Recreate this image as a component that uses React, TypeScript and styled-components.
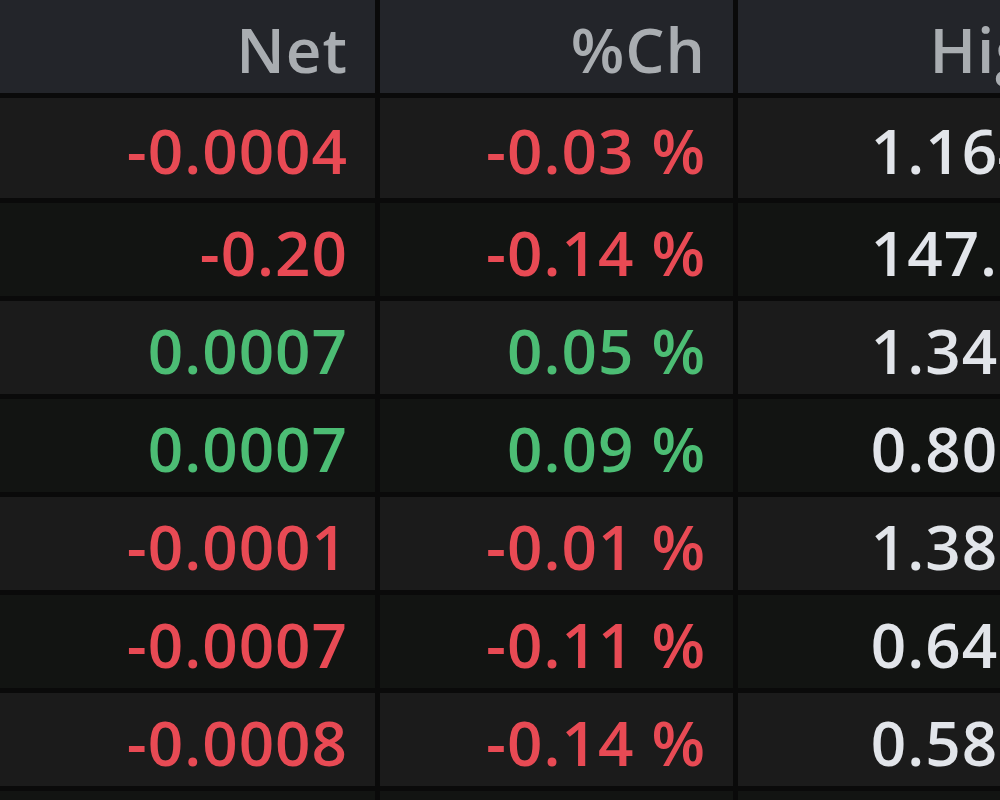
import { createGlobalStyle, styled } from "styled-components";

const GlobalStyle = createGlobalStyle`
    html, body {
        margin: 0;
        padding: 0;
        background: #0a0a0a;
        overflow: hidden;
    }
    * {
        box-sizing: border-box;
    }
`;

type Tone = "up" | "down" | "flat";

interface QuoteRow {
    net: string;
    pct: string;
    high: string;
}

const rows: QuoteRow[] = [
    { net: "-0.0004", pct: "-0.03 %", high: "1.1648" },
    { net: "-0.20", pct: "-0.14 %", high: "147.52" },
    { net: "0.0007", pct: "0.05 %", high: "1.3495" },
    { net: "0.0007", pct: "0.09 %", high: "0.8072" },
    { net: "-0.0001", pct: "-0.01 %", high: "1.3860" },
    { net: "-0.0007", pct: "-0.11 %", high: "0.6495" },
    { net: "-0.0008", pct: "-0.14 %", high: "0.5860" },
];

const toneOf = (v: string): Tone => (v.startsWith("-") ? "down" : "up");

export default function App() {
    return (
        <>
            <GlobalStyle />
            <Viewport>
                <Table>
                    <HeaderRow>
                        <Cell $head />
                        <Cell $head>Net</Cell>
                        <Cell $head>%Ch</Cell>
                        <Cell $head>High</Cell>
                    </HeaderRow>
                    {rows.map((r, i) => (
                        <DataRow key={i} $first={i === 0}>
                            <Cell $stripe={i % 2 === 1} />
                            <Cell $stripe={i % 2 === 1} $tone={toneOf(r.net)}>{r.net}</Cell>
                            <Cell $stripe={i % 2 === 1} $tone={toneOf(r.pct)}>{r.pct}</Cell>
                            <Cell $stripe={i % 2 === 1} $tone="flat">{r.high}</Cell>
                        </DataRow>
                    ))}
                    {/* next row peeking in at the bottom */}
                    <DataRow>
                        <Cell $stripe />
                        <Cell $stripe />
                        <Cell $stripe />
                        <Cell $stripe />
                    </DataRow>
                </Table>
            </Viewport>
        </>
    );
}

const toneColor: Record<Tone, string> = {
    up: "#4cbd74",
    down: "#e84a54",
    flat: "#e2e5ea",
};

const Viewport = styled.div`
    width: 1000px;
    height: 800px;
    overflow: hidden;
`;

const Table = styled.div`
    width: 1098px;
    display: flex;
    flex-direction: column;
    gap: 5px;
    background: #0a0a0a;
    font-family: "Open Sans", "Liberation Sans", sans-serif;
    font-size: 62px;
    font-weight: 600;
    letter-spacing: 1px;
`;

const HeaderRow = styled.div`
    display: grid;
    grid-template-columns: 19px 351px 353px 360px;
    gap: 5px;
    height: 93px;
`;

const DataRow = styled.div<{ $first?: boolean }>`
    display: grid;
    grid-template-columns: 19px 351px 353px 360px;
    gap: 5px;
    height: ${(p) => (p.$first ? "100px" : "93px")};
`;

const Cell = styled.div<{ $head?: boolean; $stripe?: boolean; $tone?: Tone }>`
    display: flex;
    align-items: center;
    justify-content: flex-end;
    padding: 4px 27px 0 0;
    white-space: nowrap;
    overflow: hidden;
    background: ${(p) => (p.$head ? "#23252a" : p.$stripe ? "#121412" : "#1b1b1b")};
    color: ${(p) => (p.$head ? "#a9adb1" : toneColor[p.$tone ?? "flat"])};
`;
